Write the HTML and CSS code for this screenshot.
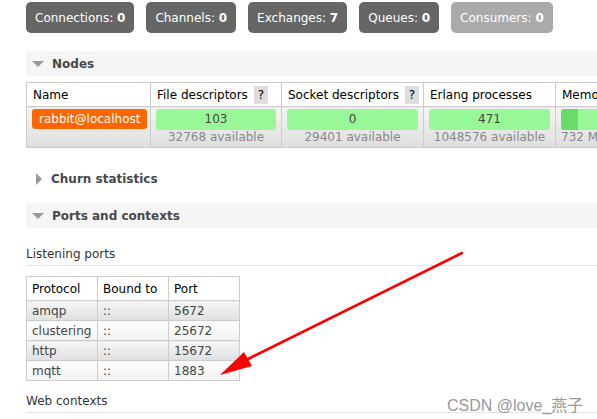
FILE: index.html
```html
<!DOCTYPE html>
<html>
<head>
<meta charset="utf-8">
<link rel="stylesheet" href="styles.css">
</head>
<body>
<div class="page">
  <div class="stats">
    <span class="stat">Connections: <b>0</b></span>
    <span class="stat">Channels: <b>0</b></span>
    <span class="stat">Exchanges: <b>7</b></span>
    <span class="stat">Queues: <b>0</b></span>
    <span class="stat stat-light">Consumers: <b>0</b></span>
  </div>

  <div class="section-head open first"><span class="tri-down"></span>Nodes</div>
  <table class="nodes">
    <tr class="head">
      <th class="c-name">Name</th>
      <th class="c-fd">File descriptors <span class="help">?</span></th>
      <th class="c-sd">Socket descriptors <span class="help">?</span></th>
      <th class="c-ep">Erlang processes</th>
      <th class="c-mem">Memory</th>
    </tr>
    <tr class="row">
      <td><span class="node">rabbit@localhost</span></td>
      <td><div class="bar">103</div><div class="sub">32768 available</div></td>
      <td><div class="bar">0</div><div class="sub">29401 available</div></td>
      <td><div class="bar">471</div><div class="sub">1048576 available</div></td>
      <td><div class="bar mem"><span class="fill" style="width:14%"></span><span class="mtxt">57 MiB</span></div><div class="sub">732 MiB high watermark</div></td>
    </tr>
  </table>

  <div class="section-head closed"><span class="tri-right"></span>Churn statistics</div>

  <div class="section-head open ports-head"><span class="tri-down"></span>Ports and contexts</div>

  <h3 class="sub-title">Listening ports</h3>
  <table class="ports">
    <tr class="head"><th class="p1">Protocol</th><th class="p2">Bound to</th><th class="p3">Port</th></tr>
    <tr class="alt1"><td>amqp</td><td class="colons">::</td><td>5672</td></tr>
    <tr class="alt0"><td>clustering</td><td class="colons">::</td><td>25672</td></tr>
    <tr class="alt1"><td>http</td><td class="colons">::</td><td>15672</td></tr>
    <tr class="alt0"><td>mqtt</td><td class="colons">::</td><td>1883</td></tr>
  </table>

  <h3 class="sub-title web">Web contexts</h3>
</div>

<div class="watermark">CSDN @love_燕子</div>

<svg class="arrow" width="597" height="419" viewBox="0 0 597 419">
  <line x1="462" y1="253" x2="240" y2="363" stroke="#ff0000" stroke-width="2.6" stroke-linecap="round"/>
  <polygon points="220,375 244,352 252,366" fill="#ff0000"/>
</svg>
</body>
</html>
```

FILE: styles.css
```css
html, body {
  margin: 0;
  padding: 0;
  background: #fff;
  overflow: hidden;
  width: 597px;
  height: 419px;
}
body {
  font-family: "DejaVu Sans", Verdana, sans-serif;
  font-size: 12px;
  color: #000;
  position: relative;
}
.page {
  padding-left: 26px;
  padding-top: 2px;
}
.stats {
  display: flex;
  gap: 12px;
  height: 31px;
}
.stat {
  display: inline-block;
  line-height: 32px;
  height: 31px;
  background: #666;
  color: #fff;
  border-radius: 5px;
  padding: 0 9px;
  font-size: 12px;
  white-space: nowrap;
}
.stat-light {
  background: #aaa;
}
.section-head {
  display: flex;
  align-items: center;
  height: 25px;
  font-weight: bold;
  font-size: 12px;
  color: #484848;
  padding-left: 6px;
  gap: 8px;
}
.section-head.open {
  background: #f5f5f5;
}
.section-head.first {
  margin-top: 18px;
}
.section-head.ports-head {
  margin-top: 12px;
}
.section-head.closed {
  background: #fff;
  margin-top: 18px;
  padding-left: 10px;
  gap: 9px;
}
.tri-down {
  width: 0; height: 0;
  border-left: 6px solid transparent;
  border-right: 6px solid transparent;
  border-top: 6px solid #999;
}
.tri-right {
  width: 0; height: 0;
  border-top: 6px solid transparent;
  border-bottom: 6px solid transparent;
  border-left: 6px solid #999;
}
table {
  border-collapse: collapse;
}
.nodes {
  margin-top: 6px;
  width: 640px;
  table-layout: fixed;
}
.nodes th, .nodes td, .ports th, .ports td {
  border: 1px solid #ccc;
}
.nodes th {
  text-align: left;
  font-weight: normal;
  height: 23px;
  padding: 0 6px;
  white-space: nowrap;
  overflow: hidden;
}
.c-name { width: 111px; }
.c-fd { width: 118px; }
.c-sd { width: 129px; }
.c-ep { width: 119px; }
.c-mem { width: 120px; }
.help {
  display: inline-block;
  background: #ddd;
  padding: 2px 4px;
  margin-left: 2px;
}
.nodes .row td {
  background: linear-gradient(#f4f4f4, #dedede);
  padding: 2px 5px 2px 5px;
  vertical-align: top;
  height: 36px;
  white-space: nowrap;
  overflow: hidden;
}
.node {
  display: inline-block;
  background: #f60;
  color: #fff;
  border-radius: 3px;
  padding: 3px 7px;
  font-size: 12px;
}
.bar {
  background: #98f898;
  border-radius: 3px;
  height: 21px;
  line-height: 21px;
  text-align: center;
  color: #444;
  position: relative;
  overflow: hidden;
}
.bar.mem {
  text-align: left;
}
.fill {
  position: absolute;
  left: 0; top: 0; bottom: 0;
  background: #66dd66;
}
.mtxt { position: relative; padding-left: 40px; }
.sub {
  color: #888;
  text-align: center;
  line-height: 14px;
}
.sub-title {
  font-weight: normal;
  font-size: 12px;
  color: #333;
  margin: 19px 0 0 0;
  padding-bottom: 4px;
  border-bottom: 1px solid #e4e4e4;
}
.ports {
  margin-top: 10px;
}
.ports th {
  font-weight: normal;
  text-align: left;
  height: 23px;
  padding: 0 5px;
}
.p1 { width: 60px; }
.p2 { width: 60px; }
.p3 { width: 60px; }
.ports td {
  height: 19px;
  padding: 0 5px;
  color: #444;
}
.alt1 td {
  background: linear-gradient(#f6f6f6, #e0e0e0);
}
.alt0 td {
  background: linear-gradient(#ffffff, #f3f3f3);
}
.colons { color: #999; }
.sub-title.web {
  margin-top: 13px;
}
.watermark {
  position: absolute;
  left: 447px;
  top: 392px;
  font-family: "Liberation Sans", "Noto Sans CJK SC", sans-serif;
  font-size: 16px;
  color: #999;
  letter-spacing: 0;
}
.arrow {
  position: absolute;
  left: 0; top: 0;
  pointer-events: none;
}
```
